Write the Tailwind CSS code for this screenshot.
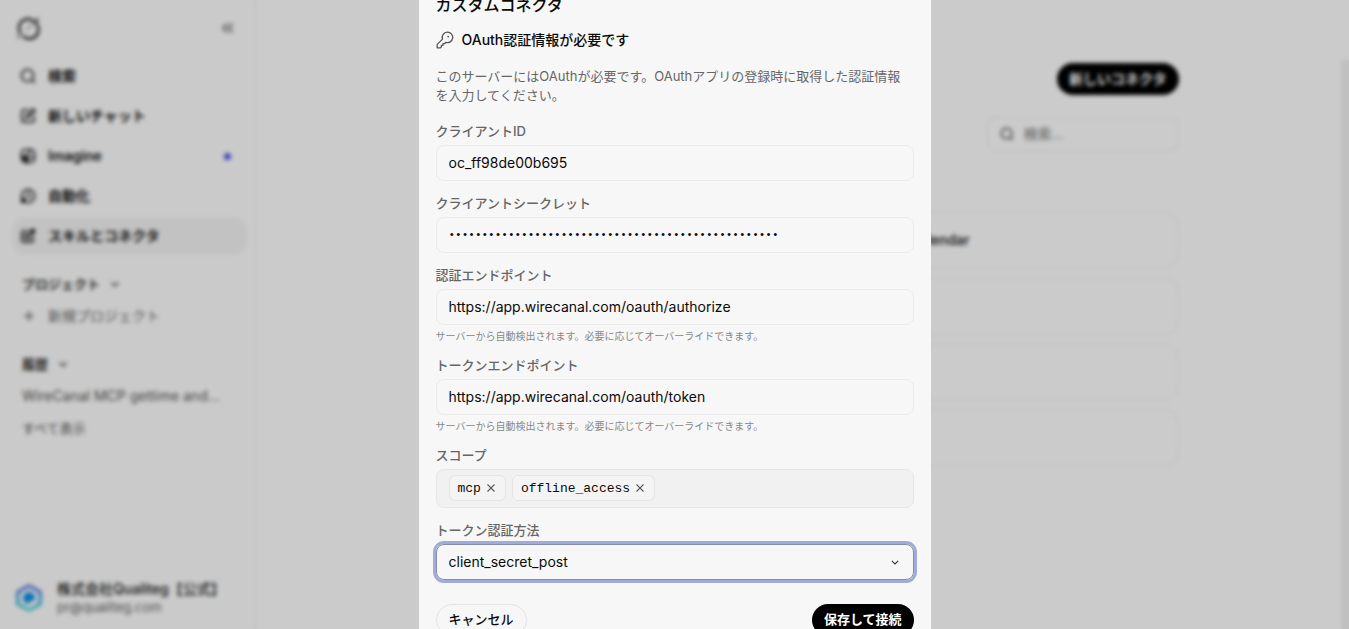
<!DOCTYPE html>
<html lang="ja">
<head>
<meta charset="utf-8">
<meta name="viewport" content="width=device-width, initial-scale=1">
<title>カスタムコネクタ</title>
<script src="https://cdn.jsdelivr.net/npm/@tailwindcss/browser@4"></script>
</head>
<body class="h-screen overflow-hidden bg-[#fefefe] font-[Inter,'Noto_Sans_CJK_JP',sans-serif] text-sm text-[#0a0a0a]">

<div class="flex h-full">
  <aside class="flex w-64 shrink-0 flex-col border-r border-[#f0f0f0] bg-[#fdfdfd]">
    <header class="flex h-14 items-center justify-between pl-4 pr-5">
      <a href="#" aria-label="ホーム">
        <svg class="size-6" viewBox="0 0 24 24" fill="none" stroke="#222" stroke-width="2.400"><path d="M20.500 8A9 9 0 0 1 6.500 19.500"/><path d="M4.500 17.200A9 9 0 0 1 17.500 5"/><path d="M4.500 17.200L1.500 22.500" stroke-width="1.200"/><path d="M10 14.500L22.500 1.500" stroke-width="1"/><path d="M22.500 1.500L18 6l2.500 3z" fill="#222" stroke="none"/></svg>
      </a>
      <button type="button" aria-label="サイドバーを閉じる">
        <svg class="size-4" viewBox="0 0 16 16" fill="none" stroke="#555" stroke-width="1.600"><path d="M8.500 3.500L4 8l4.500 4.500M14 3.500L9.500 8l4.500 4.500"/></svg>
      </button>
    </header>
    <nav class="flex flex-col gap-1 pl-3 pr-2 pt-0.5 font-semibold text-[#111]">
      <a href="#" class="flex h-9 items-center gap-3 rounded-xl px-2">
        <svg class="size-4" viewBox="0 0 16 16" fill="none" stroke="currentColor" stroke-width="1.600"><circle cx="7.500" cy="7.500" r="6"/><path d="M12 12l3 3"/></svg>検索</a>
      <a href="#" class="flex h-9 items-center gap-3 rounded-xl px-2">
        <svg class="size-4" viewBox="0 0 16 16" fill="none" stroke="currentColor" stroke-width="1.600"><path d="M8.500 1.800H4.500a2.700 2.700 0 0 0-2.700 2.700v7a2.700 2.700 0 0 0 2.700 2.700h7a2.700 2.700 0 0 0 2.700-2.700V8M6 10l1-3 6-6 2 2-6 6z"/></svg>新しいチャット</a>
      <a href="#" class="flex h-9 items-center gap-3 rounded-xl px-2">
        <svg class="size-4" viewBox="0 0 16 16" fill="none" stroke="currentColor" stroke-width="1.600"><rect x="1.500" y="1.500" width="13" height="13" rx="4"/><path d="M2 9c4 0 7-2 8-7M7 14c0-3 3-5 7-5"/><path d="M2 9l5-1v6z" fill="currentColor"/></svg>Imagine
        <span class="ml-auto mr-2 size-[7px] rounded-full bg-[#4056e8]"></span></a>
      <a href="#" class="flex h-9 items-center gap-3 rounded-xl px-2">
        <svg class="size-4" viewBox="0 0 16 16" fill="none" stroke="currentColor" stroke-width="1.600"><path d="M1.800 9.500A6.500 6.500 0 1 1 7 14.500M8 4.500V8l3 1.500"/><path d="M1 10h5v5H1z" fill="currentColor" stroke="none"/></svg>自動化</a>
      <a href="#" class="flex h-9 items-center gap-3 rounded-xl bg-[#f3f3f3] px-2">
        <svg class="size-4" viewBox="0 0 16 16" fill="none" stroke="currentColor" stroke-width="1.700"><path d="M7 3H3.500A1.500 1.500 0 0 0 2 4.500v8A1.500 1.500 0 0 0 3.500 14h8a1.500 1.500 0 0 0 1.500-1.500V9M2 8.500h11M7.500 3v11"/><rect x="10" y="1" width="5" height="5" rx="1" fill="currentColor" stroke="none"/></svg>スキルとコネクタ</a>
    </nav>
    <section class="flex flex-col px-[22px] pt-5">
      <h2 class="flex h-5 items-center gap-2.5 text-[13px] font-bold text-[#333]">プロジェクト
        <svg class="size-2.5" viewBox="0 0 10 10" fill="none" stroke="currentColor" stroke-width="1.400"><path d="M1.500 3.500L5 7l3.500-3.500"/></svg></h2>
      <a href="#" class="mt-1.5 flex h-8 items-center gap-3 text-[#666]">
        <svg class="size-3.5" viewBox="0 0 14 14" fill="none" stroke="currentColor" stroke-width="1.600"><path d="M7 2v10M2 7h10"/></svg>新規プロジェクト</a>
      <h2 class="mt-[22px] flex h-5 items-center gap-2.5 text-[13px] font-bold text-[#333]">履歴
        <svg class="size-2.5" viewBox="0 0 10 10" fill="none" stroke="currentColor" stroke-width="1.400"><path d="M1.500 3.500L5 7l3.500-3.500"/></svg></h2>
      <a href="#" class="mt-1.5 h-8 truncate leading-8 text-[#555]">WireCanal MCP gettime and…</a>
      <a href="#" class="h-8 text-[13px] leading-8 text-[#555]">すべて表示</a>
    </section>
    <footer class="mt-auto flex items-center gap-3.5 pb-[13px] pl-[15px]">
      <svg class="size-7 shrink-0" viewBox="0 0 28 30" fill="none"><defs><linearGradient id="hex" x1="0" y1="0" x2="0" y2="1"><stop offset="0" stop-color="#4a63d8"/><stop offset=".6" stop-color="#1f9fe0"/><stop offset="1" stop-color="#37d3c4"/></linearGradient></defs><path d="M14 2l12 6.500v13L14 28 2 21.500v-13z" stroke="url(#hex)" stroke-width="3"/><path d="M14 8.500a6.500 6.500 0 1 0 0 13l1-3 5-1a6.500 6.500 0 0 0-6-9z" fill="#0a8de0"/></svg>
      <div class="leading-[18px]">
        <p class="font-medium text-[#111]">株式会社Qualiteg【公式】</p>
        <p class="text-[13px] text-[#666]">pr@qualiteg.com</p>
      </div>
    </footer>
  </aside>

  <main class="-mr-2 flex min-w-0 flex-1 flex-col">
    <div class="mx-auto w-full max-w-[752px] pt-[63px]">
      <div class="flex justify-end">
        <button type="button" class="h-8 rounded-full bg-black px-3 font-semibold text-white">新しいコネクタ</button>
      </div>
      <div class="mt-[22px] flex justify-end">
        <label class="flex h-[34px] w-48 items-center gap-2.5 rounded-lg border border-[#ececec] px-3">
          <svg class="size-3.5 shrink-0" viewBox="0 0 16 16" fill="none" stroke="#444" stroke-width="1.600"><circle cx="7.500" cy="7.500" r="6"/><path d="M12 12l3 3"/></svg>
          <input type="search" aria-label="検索" placeholder="検索..." class="w-full min-w-0 bg-transparent outline-none placeholder:text-[#777]">
        </label>
      </div>
      <ul class="mt-[60px] grid grid-cols-2 gap-2 font-medium">
        <li class="h-[58px] rounded-2xl border border-[#efefef]"></li>
        <li class="flex h-[58px] items-center rounded-2xl border border-[#efefef] pl-[50px]">Google Calendar</li>
        <li class="h-[58px] rounded-2xl border border-[#efefef]"></li>
        <li class="h-[58px] rounded-2xl border border-[#efefef]"></li>
        <li class="h-[58px] rounded-2xl border border-[#efefef]"></li>
        <li class="h-[58px] rounded-2xl border border-[#efefef]"></li>
        <li class="h-[58px] rounded-2xl border border-[#efefef]"></li>
        <li class="h-[58px] rounded-2xl border border-[#efefef]"></li>
      </ul>
    </div>
  </main>
  <div class="mt-[60px] w-2 shrink-0 bg-[#f0f0f0]"></div>
</div>

<div class="fixed inset-0 flex items-center justify-center bg-black/20 backdrop-blur-[2px]">
  <form role="dialog" aria-labelledby="title" class="w-full max-w-lg shrink-0 bg-[#f7f7f7] px-[17px] pb-[17px] pt-4">
    <h1 id="title" class="text-base font-medium leading-6">カスタムコネクタ</h1>
    <div class="mt-[11px] flex h-6 items-center gap-2 font-medium">
      <svg class="size-[18px]" viewBox="0 0 18 18" fill="none" stroke="#555" stroke-width="1.300" stroke-linejoin="round"><path d="M11.300 1.200a5.200 5.200 0 1 1-1.500 10.100L8.500 12.700H7v1.600H5.400v1.600L4.500 16.800H1.200v-3.400l5.300-5.300a5.200 5.200 0 0 1 4.800-6.900z"/><circle cx="12.200" cy="5.600" r=".9" fill="#555" stroke="none"/></svg>
      <h2>OAuth認証情報が必要です</h2>
    </div>
    <p class="mt-[15px] pr-2 text-[13px] leading-[19px] text-[#666]">このサーバーにはOAuthが必要です。OAuthアプリの登録時に取得した認証情報を入力してください。</p>

    <div class="mt-4 flex flex-col gap-3">
      <div class="flex flex-col gap-1">
        <label for="cid" class="text-[13px] font-medium leading-5 text-[#666]">クライアントID</label>
        <input id="cid" type="text" value="oc_ff98de00b695" class="h-9 rounded-lg border border-[#ebebeb] px-3 outline-none">
      </div>
      <div class="flex flex-col gap-1">
        <label for="secret" class="text-[13px] font-medium leading-5 text-[#666]">クライアントシークレット</label>
        <input id="secret" type="password" value="00000000000000000000000000000000000000000000000000" class="h-9 rounded-lg border border-[#ebebeb] px-3 font-['Liberation_Mono',monospace] text-[11px] outline-none">
      </div>
      <div class="flex flex-col gap-1">
        <label for="auth" class="text-[13px] font-medium leading-5 text-[#666]">認証エンドポイント</label>
        <input id="auth" type="text" value="https://app.wirecanal.com/oauth/authorize" class="h-9 rounded-lg border border-[#ebebeb] px-3 outline-none">
        <p class="text-[10px] leading-[14px] text-[#888]">サーバーから自動検出されます。必要に応じてオーバーライドできます。</p>
      </div>
      <div class="flex flex-col gap-1">
        <label for="token" class="text-[13px] font-medium leading-5 text-[#666]">トークンエンドポイント</label>
        <input id="token" type="text" value="https://app.wirecanal.com/oauth/token" class="h-9 rounded-lg border border-[#ebebeb] px-3 outline-none">
        <p class="text-[10px] leading-[14px] text-[#888]">サーバーから自動検出されます。必要に応じてオーバーライドできます。</p>
      </div>
      <div class="flex flex-col gap-1">
        <span class="text-[13px] font-medium leading-5 text-[#666]">スコープ</span>
        <ul class="flex h-[39px] items-center gap-1.5 rounded-lg border border-[#e6e6e6] bg-[#f1f1f1] px-3 font-['Liberation_Mono',monospace] text-[13px]">
          <li class="flex h-[26px] items-center gap-1 rounded-md border border-[#e4e4e4] bg-[#f4f4f4] px-2">
            <span class="pt-0.5">mcp</span>
            <button type="button" aria-label="mcpを削除"><svg class="size-3" viewBox="0 0 12 12" fill="none" stroke="#555" stroke-width="1.100"><path d="M2.500 2.500l7 7M9.500 2.500l-7 7"/></svg></button></li>
          <li class="flex h-[26px] items-center gap-1 rounded-md border border-[#e4e4e4] bg-[#f4f4f4] px-2">
            <span class="pt-0.5">offline_access</span>
            <button type="button" aria-label="offline_accessを削除"><svg class="size-3" viewBox="0 0 12 12" fill="none" stroke="#555" stroke-width="1.100"><path d="M2.500 2.500l7 7M9.500 2.500l-7 7"/></svg></button></li>
        </ul>
      </div>
      <div class="flex flex-col gap-1">
        <label for="method" class="text-[13px] font-medium leading-5 text-[#666]">トークン認証方法</label>
        <div class="relative">
          <select id="method" class="block h-9 w-full appearance-none rounded-lg border border-[#858ba8] px-3 outline-none ring-3 ring-[#a1abd8]">
            <option>client_secret_post</option>
            <option>client_secret_basic</option>
          </select>
          <svg class="pointer-events-none absolute right-[13px] top-3 size-3" viewBox="0 0 12 12" fill="none" stroke="#333" stroke-width="1.100"><path d="M2.800 4.800L6 8l3.200-3.200"/></svg>
        </div>
      </div>
    </div>

    <div class="mt-6 flex justify-between text-[13px]">
      <button type="button" class="h-8 rounded-full border border-[#e4e4e4] px-3 font-medium">キャンセル</button>
      <button type="submit" class="h-8 rounded-full bg-black px-3 font-semibold text-white">保存して接続</button>
    </div>
  </form>
</div>
</body>
</html>
